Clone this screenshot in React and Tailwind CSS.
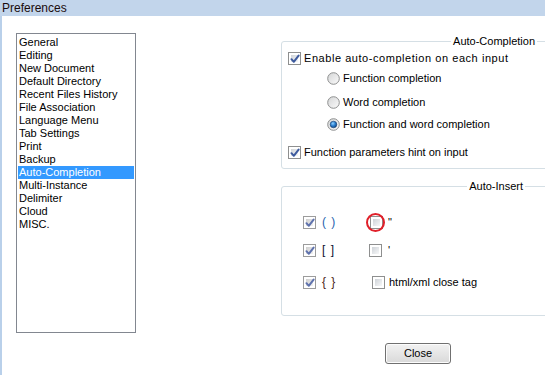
import React from "react";

const items = [
  "General",
  "Editing",
  "New Document",
  "Default Directory",
  "Recent Files History",
  "File Association",
  "Language Menu",
  "Tab Settings",
  "Print",
  "Backup",
  "Auto-Completion",
  "Multi-Instance",
  "Delimiter",
  "Cloud",
  "MISC.",
];

const CheckBox = ({ checked, dim }) => (
  <span
    className={
      dim
        ? "relative inline-flex h-[13px] w-[13px] shrink-0 items-center justify-center border border-[#9c9c9c] bg-white p-[2px]"
        : "relative inline-flex h-[13px] w-[13px] shrink-0 items-center justify-center border border-[#8e8f8f] bg-white p-[2px]"
    }
  >
    <span
      className={
        dim
          ? "block h-full w-full bg-gradient-to-br from-[#cfcfcf] to-[#f2f2f2]"
          : "block h-full w-full bg-gradient-to-br from-[#cfd3d8] to-[#f7f8f9]"
      }
    />
    {checked && (
      <svg className="absolute left-[1px] top-[1px]" width="10" height="10" viewBox="0 0 10 10">
        <path
          d="M1.5 5.2 L3.8 7.8 L8.6 1.6"
          fill="none"
          stroke={dim ? "#5f72ad" : "#3d5a9e"}
          strokeWidth="2"
          strokeLinecap="round"
          strokeLinejoin="round"
        />
      </svg>
    )}
  </span>
);

const Radio = ({ checked }) => (
  <svg width="13" height="13" viewBox="0 0 13 13" className="shrink-0">
    <defs>
      <linearGradient id="rg" x1="0" y1="0" x2="1" y2="1">
        <stop offset="0" stopColor="#d4d5d6" />
        <stop offset="1" stopColor="#fbfbfb" />
      </linearGradient>
      <radialGradient id="rb" cx="0.4" cy="0.35" r="0.7">
        <stop offset="0" stopColor="#8ed0ff" />
        <stop offset="0.5" stopColor="#2b7fd0" />
        <stop offset="1" stopColor="#0d3f7d" />
      </radialGradient>
    </defs>
    <circle cx="6.5" cy="6.5" r="5.8" fill="url(#rg)" stroke="#8e8f8f" strokeWidth="1" />
    {checked && <circle cx="6.5" cy="6.5" r="3.3" fill="url(#rb)" stroke="#1a3f6e" strokeWidth="0.6" />}
  </svg>
);

const App = () => {
  return (
    <div className="relative h-[375px] w-[545px] overflow-hidden bg-white font-['Liberation_Sans',Arial,sans-serif] text-[11px] text-black">
      {/* Title bar */}
      <div className="flex h-[16px] items-center bg-[#c2d5eb] pl-[2px] text-[12px] text-[#1b0c0c]">
        Preferences
      </div>

      <div className="flex h-[359px] border-l-2 border-[#b9d0ea]">
        {/* Left: category list */}
        <div className="pl-[14px] pt-[17px]">
          <div className="h-[300px] w-[120px] border border-[#828790] p-[1px] pt-[2px]">
            {items.map((item) => (
              <div
                key={item}
                className={
                  item === "Auto-Completion"
                    ? "h-[13px] bg-[#3399ff] pl-[1px] leading-[13px] text-white"
                    : "h-[13px] pl-[1px] leading-[13px]"
                }
              >
                {item}
              </div>
            ))}
          </div>
        </div>

        {/* Right: settings */}
        <div className="ml-[145px] pt-[25px]">
          {/* Auto-Completion group */}
          <div className="relative h-[128px] w-[280px] rounded-[3px] border border-[#d5dfe5] pl-[6px]">
            <span className="absolute right-[23px] top-[-8px] bg-white px-[2px] leading-[14px]">
              Auto-Completion
            </span>
            <div className="mt-[9px] flex h-[14px] items-center gap-[3px]">
              <CheckBox checked />
              <span className="tracking-[0.55px]">Enable auto-completion on each input</span>
            </div>
            <div className="ml-[39px] mt-[6px] flex h-[14px] items-center gap-[3px]">
              <Radio />
              <span>Function completion</span>
            </div>
            <div className="ml-[39px] mt-[10px] flex h-[14px] items-center gap-[3px]">
              <Radio />
              <span>Word completion</span>
            </div>
            <div className="ml-[39px] mt-[8px] flex h-[14px] items-center gap-[3px]">
              <Radio checked />
              <span>Function and word completion</span>
            </div>
            <div className="mt-[14px] flex h-[14px] items-center gap-[3px]">
              <CheckBox checked />
              <span>Function parameters hint on input</span>
            </div>
          </div>

          {/* Auto-Insert group */}
          <div className="relative mt-[17px] h-[130px] w-[280px] rounded-[3px] border border-[#d5dfe5] pl-[21px]">
            <span className="absolute right-[35px] top-[-8px] bg-white px-[2px] leading-[14px]">
              Auto-Insert
            </span>
            <div className="mt-[28px] flex h-[14px] items-center">
              <div className="flex w-[67px] items-center gap-[6px]">
                <CheckBox checked dim />
                <span className="text-[12px] tracking-[1px] text-[#1f5fae]">( )</span>
              </div>
              <div className="flex items-center gap-[5px]">
                <span className="relative inline-flex">
                  <CheckBox />
                  <span className="absolute -inset-[3px] -translate-x-[1px] rounded-full border-2 border-[#e0202a]" />
                </span>
                <span>"</span>
              </div>
            </div>
            <div className="mt-[14px] flex h-[14px] items-center">
              <div className="flex w-[66px] items-center gap-[6px]">
                <CheckBox checked dim />
                <span className="text-[12px] tracking-[1px] text-[#0d1030]">[ ]</span>
              </div>
              <div className="flex items-center gap-[6px]">
                <CheckBox />
                <span>'</span>
              </div>
            </div>
            <div className="mt-[18px] flex h-[14px] items-center">
              <div className="flex w-[69px] items-center gap-[6px]">
                <CheckBox checked dim />
                <span className="text-[12px] tracking-[1px] text-[#4a2416]">{"{ }"}</span>
              </div>
              <div className="flex items-center gap-[4px]">
                <CheckBox />
                <span>html/xml close tag</span>
              </div>
            </div>
          </div>

          {/* Close button */}
          <button className="ml-[104px] mt-[27px] flex h-[21px] w-[66px] items-center justify-center rounded-[3px] border border-[#707070] bg-gradient-to-b from-[#f2f2f2] to-[#d9d9d9] text-[11px] shadow-[inset_0_0_0_1px_#fcfcfc]">
            Close
          </button>
        </div>
      </div>
    </div>
  );
};

export default App;
